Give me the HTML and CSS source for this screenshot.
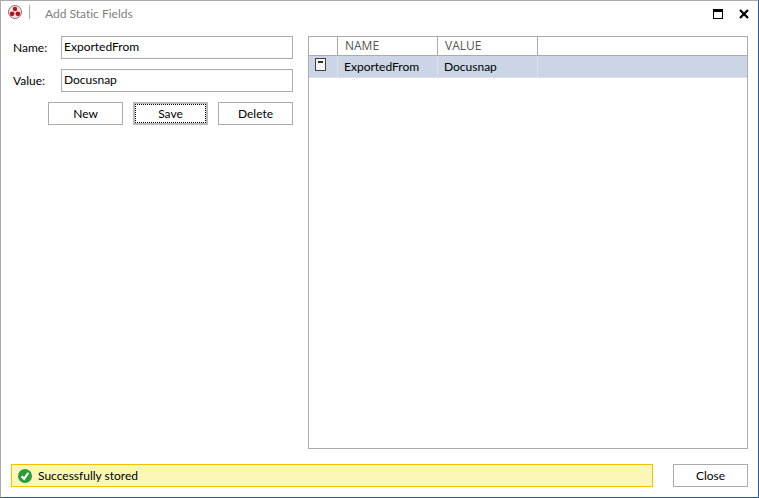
FILE: index.html
```html
<!DOCTYPE html>
<html lang="en">
<head>
    <meta charset="UTF-8">
    <title>Add Static Fields</title>
    <link rel="stylesheet" href="styles.css">
</head>
<body>
    <div class="window">

        <!-- Title bar -->
        <header class="titlebar">
            <svg class="logo" width="14" height="14" viewBox="0 0 14 14" aria-hidden="true">
                <circle cx="7" cy="7" r="6.5" fill="#f3e4e5" stroke="#a8686c" stroke-width="1"/>
                <circle cx="7" cy="4" r="2.2" fill="#a61c22"/>
                <circle cx="4.1" cy="8.8" r="2.4" fill="#a61c22"/>
                <circle cx="9.9" cy="8.8" r="2.4" fill="#a61c22"/>
            </svg>
            <span class="divider"></span>
            <h1>Add Static Fields</h1>
            <button type="button" class="win-btn" aria-label="Maximize">
                <svg width="10" height="10" viewBox="0 0 10 10" shape-rendering="crispEdges">
                    <path d="M0 0h10v10H0zM1 3v6h8V3z" fill="#000" fill-rule="evenodd"/>
                </svg>
            </button>
            <button type="button" class="win-btn" aria-label="Close window">
                <svg width="10" height="10" viewBox="0 0 10 10">
                    <path d="M1 1l8 8M9 1l-8 8" stroke="#000" stroke-width="2.2"/>
                </svg>
            </button>
        </header>

        <main class="content">
            <!-- Field form -->
            <form class="field-form">
                <div class="field">
                    <label for="name">Name:</label>
                    <input type="text" id="name" value="ExportedFrom">
                </div>
                <div class="field">
                    <label for="value">Value:</label>
                    <input type="text" id="value" value="Docusnap">
                </div>
                <div class="actions">
                    <button type="button" class="btn">New</button>
                    <button type="button" class="btn btn-focused">Save</button>
                    <button type="button" class="btn">Delete</button>
                </div>
            </form>

            <!-- Field list -->
            <div class="list">
                <table>
                    <thead>
                        <tr>
                            <th class="col-icon"></th>
                            <th class="col-text">NAME</th>
                            <th class="col-text">VALUE</th>
                            <th></th>
                        </tr>
                    </thead>
                    <tbody>
                        <tr class="selected">
                            <td class="icon-cell">
                                <svg width="11" height="13" viewBox="0 0 11 13" shape-rendering="crispEdges" aria-hidden="true">
                                    <rect x="0.5" y="0.5" width="10" height="12" fill="#f6f6f6" stroke="#404040"/>
                                    <rect x="3" y="3" width="5" height="2" fill="#303030"/>
                                </svg>
                            </td>
                            <td>ExportedFrom</td>
                            <td>Docusnap</td>
                            <td></td>
                        </tr>
                    </tbody>
                </table>
            </div>
        </main>

        <!-- Status and close -->
        <footer class="footer">
            <div class="status" role="status">
                <svg width="14" height="14" viewBox="0 0 14 14" aria-hidden="true">
                    <circle cx="7" cy="7" r="7" fill="#2f9a3a"/>
                    <path d="M3.6 7.2l2.5 2.7 4.2-6" fill="none" stroke="#fff" stroke-width="2"/>
                </svg>
                <span>Successfully stored</span>
            </div>
            <button type="button" class="btn">Close</button>
        </footer>
    </div>
</body>
</html>
```

FILE: styles.css
```css
:root {
    --line: #ababab;
    --frame: #2b579a;
    --selected: #cbd5e5;
    --status-bg: #fcf7b6;
    --status-line: #fdbe00;
}

* {
    margin: 0;
    padding: 0;
    box-sizing: border-box;
}

body {
    font-family: Lato, "Open Sans", sans-serif;
    font-size: 12px;
    font-variant-ligatures: none;
    line-height: 16px;
    color: #000;
    background: #fff;
}

button,
input {
    font: inherit;
    color: inherit;
}

.window {
    min-height: 100vh;
    display: flex;
    flex-direction: column;
    padding: 0 10px 10px;
    border: 1px solid var(--line);
    border-right-color: var(--frame);
    border-bottom-color: var(--frame);
}

.titlebar {
    height: 35px;
    display: flex;
    align-items: flex-start;
    padding-top: 4px;
}

.logo {
    margin-left: -3px;
}

.divider {
    width: 1px;
    height: 14px;
    margin: 0 15px 0 7px;
    background: var(--line);
}

.titlebar h1 {
    flex: 1;
    font-size: 12px;
    line-height: 18px;
    font-weight: 400;
    color: #808080;
}

.win-btn {
    width: 26px;
    height: 18px;
    display: flex;
    align-items: center;
    justify-content: center;
    border: none;
    background: none;
}

.win-btn:last-child {
    margin-right: -9px;
}

.content {
    flex: 1;
    display: flex;
    gap: 15px;
}

.field-form {
    flex: 0 0 282px;
    display: flex;
    flex-direction: column;
    gap: 10px;
}

.field {
    display: flex;
    align-items: center;
}

.field label {
    width: 50px;
    padding-left: 2px;
}

.field input {
    flex: 1;
    min-width: 0;
    height: 23px;
    padding: 0 2px 2px;
    border: 1px solid var(--line);
    outline: none;
}

.actions {
    display: flex;
    justify-content: flex-end;
    gap: 10px;
}

.btn {
    width: 75px;
    height: 23px;
    border: 1px solid var(--line);
    background: #fff;
}

.btn-focused {
    border-width: 2px;
    border-color: #bababa;
    outline: 1px dotted #000;
    outline-offset: -3px;
}

.list {
    flex: 1;
    border: 1px solid var(--line);
}

table {
    width: 100%;
    table-layout: fixed;
    border-collapse: separate;
    border-spacing: 0;
}

th,
td {
    padding: 0 6px;
    text-align: left;
    vertical-align: middle;
}

th {
    height: 19px;
    padding-left: 7px;
    font-family: "Open Sans", sans-serif;
    font-weight: 400;
    color: #555;
    border-right: 1px solid var(--line);
    border-bottom: 1px solid var(--line);
}

td {
    height: 22px;
    border-right: 1px solid #dcdfe5;
    border-bottom: 1px solid #dcdfe5;
}

th:last-child,
td:last-child {
    border-right: none;
}

.col-icon {
    width: 29px;
}

.col-text {
    width: 100px;
}

.selected td {
    background: var(--selected);
}

.icon-cell svg {
    display: block;
    margin-bottom: 4px;
}

.footer {
    display: flex;
    gap: 20px;
    margin-top: 15px;
}

.status {
    flex: 1;
    height: 23px;
    display: flex;
    align-items: center;
    gap: 6px;
    padding: 1px 6px 0;
    border: 1px solid var(--status-line);
    background: var(--status-bg);
}
```
